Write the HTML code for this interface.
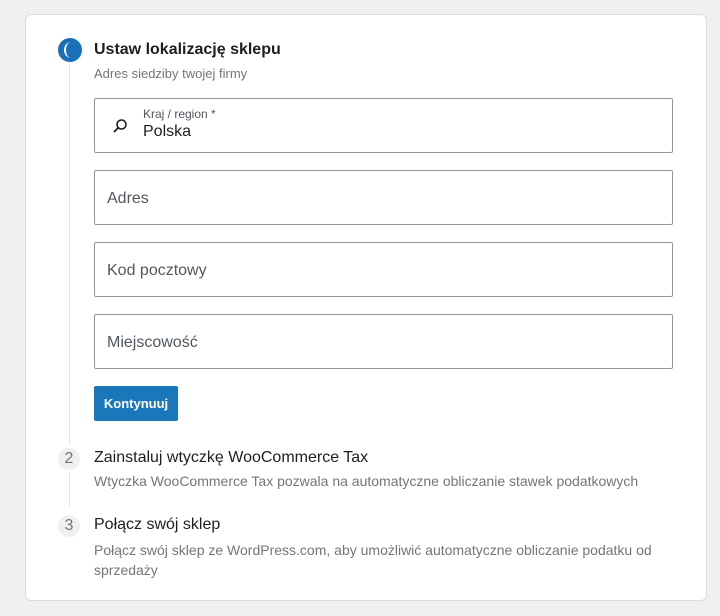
<!DOCTYPE html>
<html><head><meta charset="utf-8"><style>
body{margin:0;width:720px;height:616px;background:#f0f0f1;font-family:"Liberation Sans",sans-serif;position:relative;overflow:hidden}
.card{position:absolute;left:25px;top:14px;width:682px;height:587px;background:#fff;border:1px solid #dcdcde;border-radius:6px;box-sizing:border-box}
.a{position:absolute}
.inp{position:absolute;left:94px;width:579px;height:55px;border:1px solid #949494;border-radius:2px;box-sizing:border-box;background:#fff}
.ph{position:absolute;left:12px;top:19px;font-size:16px;color:#50575e}
.num{position:absolute;width:22px;height:22px;border-radius:50%;background:#f0f0f0;color:#757575;font-size:16px;text-align:center;line-height:22px}
</style></head><body>
<div class="card"></div>
<div class="a" style="left:69px;top:64px;width:1px;height:380px;background:#e0e0e0"></div>
<div class="a" style="left:69px;top:472px;width:1px;height:34px;background:#e0e0e0"></div>
<div class="a" style="left:58px;top:38px;width:24px;height:24px;border-radius:50%;background:#1a70b8"></div>
<div class="a" style="left:64px;top:42px;width:14px;height:16px;border-radius:50%;border-left:2px solid #fff;box-sizing:border-box;"></div>
<div class="a" style="left:94px;top:41px;font-size:16px;font-weight:bold;color:#1e1e1e">Ustaw lokalizację sklepu</div>
<div class="a" style="left:94px;top:66px;font-size:13px;color:#757575">Adres siedziby twojej firmy</div>
<div class="inp" style="top:98px">
<svg class="a" style="left:17px;top:19px" width="16" height="16" viewBox="0 0 16 16"><circle cx="9.5" cy="6.5" r="4.5" fill="none" stroke="#1e1e1e" stroke-width="1.6"/><line x1="6.3" y1="9.7" x2="2" y2="14" stroke="#1e1e1e" stroke-width="1.8"/></svg>
<div class="a" style="left:48px;top:8px;font-size:12px;color:#50575e">Kraj / region *</div>
<div class="a" style="left:48px;top:24px;font-size:16px;color:#1e1e1e">Polska</div>
</div>
<div class="inp" style="top:170px"><div class="ph">Adres</div></div>
<div class="inp" style="top:242px"><div class="ph">Kod pocztowy</div></div>
<div class="inp" style="top:314px"><div class="ph">Miejscowość</div></div>
<div class="a" style="left:94px;top:386px;width:84px;height:35px;background:#1a77b9;border-radius:2px;color:#fff;font-size:13px;font-weight:bold;text-align:center;line-height:35px">Kontynuuj</div>
<div class="num" style="left:58px;top:448px">2</div>
<div class="a" style="left:94px;top:449px;font-size:16px;color:#1e1e1e">Zainstaluj wtyczkę WooCommerce Tax</div>
<div class="a" style="left:94px;top:473px;font-size:14px;color:#757575">Wtyczka WooCommerce Tax pozwala na automatyczne obliczanie stawek podatkowych</div>
<div class="num" style="left:58px;top:515px">3</div>
<div class="a" style="left:94px;top:516px;font-size:16px;color:#1e1e1e">Połącz swój sklep</div>
<div class="a" style="left:94px;top:540px;width:590px;font-size:14px;line-height:20px;color:#757575">Połącz swój sklep ze WordPress.com, aby umożliwić automatyczne obliczanie podatku od sprzedaży</div>
</body></html>
